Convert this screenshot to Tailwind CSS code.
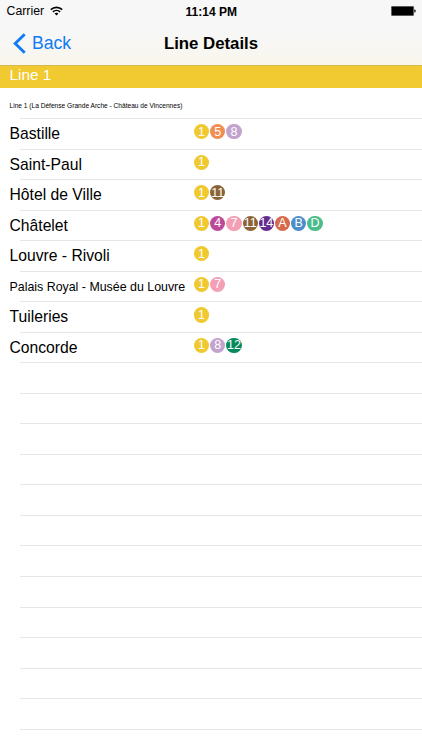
<!DOCTYPE html>
<html lang="en">
<head>
  <meta charset="UTF-8" />
  <meta name="viewport" content="width=device-width, initial-scale=1.0" />
  <title>Line Details</title>
  <script src="https://cdn.jsdelivr.net/npm/@tailwindcss/browser@4"></script>
</head>
<body class="bg-white text-black font-['Liberation_Sans',Arial,sans-serif] h-[750px] overflow-hidden">

<!-- Status bar + navigation bar -->
<header class="h-[65px] bg-linear-to-b from-[#f7f7f7] from-50% to-[#f9f6ec]">
  <div class="h-[22px] grid grid-cols-3 items-center pl-[6.5px] pr-[6px] text-[12.3px]">
    <div class="flex items-center gap-[6px]">
      <span>Carrier</span>
      <svg class="w-[13px] h-[10px] -mt-px" viewBox="0 0 13 10" fill="none" stroke="#000" stroke-width="1.6">
        <path d="M0.8 3.7a8.2 8.2 0 0 1 11.4 0" />
        <path d="M2.9 5.9a5.2 5.2 0 0 1 7.2 0" />
        <path d="M6.5 9.6L4.6 7.6a2.8 2.8 0 0 1 3.8 0z" fill="#000" stroke="none" />
      </svg>
    </div>
    <div class="text-center text-[12px] leading-[20px] pt-px font-bold">11:14 PM</div>
    <div class="flex justify-end">
      <svg class="w-[25px] h-[10px]" viewBox="0 0 25 10">
        <rect x="0.3" y="0.3" width="22.4" height="9.4" rx="1" fill="#000" stroke="#777" stroke-width="0.6" />
        <path d="M23.3 3.6h0.6q0.8 0.4 0.8 1.4t-0.8 1.4h-0.6z" fill="#000" />
      </svg>
    </div>
  </div>
  <div class="h-[43px] grid grid-cols-3 items-center">
    <a href="#" class="flex items-center gap-[6px] pl-[13px] text-[17.6px] text-[#107bf8]">
      <svg class="w-[13px] h-[21px]" viewBox="0 0 13 21" fill="none" stroke="#107bf8" stroke-width="2.9">
        <path d="M11.7 1.2L2.2 10.5L11.7 19.8" />
      </svg>
      <span>Back</span>
    </a>
    <h1 class="text-center text-[16.8px] font-bold whitespace-nowrap">Line Details</h1>
  </div>
</header>

<!-- Line banner -->
<div class="h-[23px] bg-[#f1c931] border-t border-[#d8b94e] pl-[9.5px] text-[15.4px] leading-[17px] text-white">Line 1</div>

<!-- Direction -->
<div class="h-[31px] pl-[9.5px] pt-[12px] text-[6.6px] leading-[12px] relative">
  Line 1 (La Défense Grande Arche - Château de Vincennes)
  <div class="absolute left-5 right-0 bottom-0 h-px bg-[#e6e6e8]"></div>
</div>

<!-- Stations -->
<ul class="text-[15.7px] [&>li]:h-[30.54px] [&>li]:flex [&>li]:items-center [&>li]:pl-[9.5px] [&>li]:bg-[linear-gradient(#e6e6e8,#e6e6e8)] [&>li]:bg-no-repeat [&>li]:bg-[position:20px_100%] [&>li]:bg-[size:100%_1px] [&_p]:w-[184.5px] [&_p]:-mt-px [&_p]:whitespace-nowrap [&_div]:flex [&_div]:gap-px [&_div]:-mt-[5px] [&_b]:size-[15.2px] [&_b]:rounded-full [&_b]:flex [&_b]:items-center [&_b]:justify-center [&_b]:text-[12.5px] [&_b]:leading-none [&_b]:font-normal [&_b]:text-white">
  <li><p>Bastille</p><div><b class="bg-[#f0c830]">1</b><b class="bg-[#f08d50]">5</b><b class="bg-[#c3a3cd]">8</b></div></li>
  <li><p>Saint-Paul</p><div><b class="bg-[#f0c830]">1</b></div></li>
  <li><p>Hôtel de Ville</p><div><b class="bg-[#f0c830]">1</b><b class="bg-[#8b6336]">11</b></div></li>
  <li><p>Châtelet</p><div><b class="bg-[#f0c830]">1</b><b class="bg-[#bb4b9a]">4</b><b class="bg-[#f39fb5]">7</b><b class="bg-[#8b6336]">11</b><b class="bg-[#652c90]">14</b><b class="bg-[#d56a4c]">A</b><b class="bg-[#4e8dcb]">B</b><b class="bg-[#4bbd8b]">D</b></div></li>
  <li><p>Louvre - Rivoli</p><div><b class="bg-[#f0c830]">1</b></div></li>
  <li><p class="text-[12.4px] pt-[2px]">Palais Royal - Musée du Louvre</p><div><b class="bg-[#f0c830]">1</b><b class="bg-[#f39fb5]">7</b></div></li>
  <li><p>Tuileries</p><div><b class="bg-[#f0c830]">1</b></div></li>
  <li><p>Concorde</p><div><b class="bg-[#f0c830]">1</b><b class="bg-[#c3a3cd]">8</b><b class="bg-[#078b5c]">12</b></div></li>
  <!-- empty rows -->
  <li></li>
  <li></li>
  <li></li>
  <li></li>
  <li></li>
  <li></li>
  <li></li>
  <li></li>
  <li></li>
  <li></li>
  <li></li>
  <li></li>
</ul>

</body>
</html>
